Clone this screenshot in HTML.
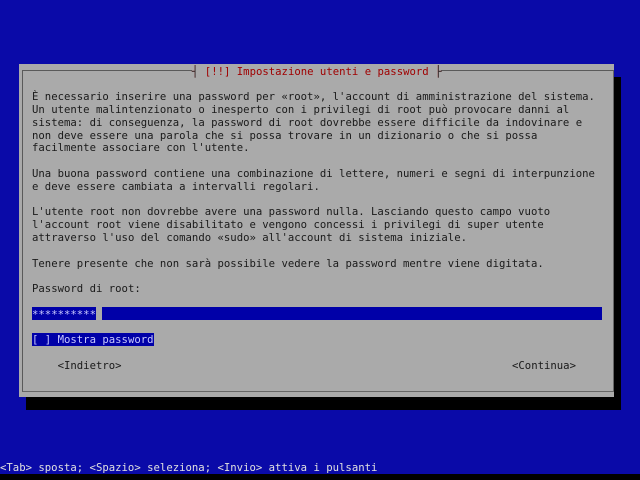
<!DOCTYPE html>
<html><head><meta charset="utf-8"><style>
html,body{margin:0;padding:0;width:640px;height:480px;overflow:hidden;background:#0a0aa8;}
.t{position:absolute;font-family:"DejaVu Sans Mono","Liberation Mono",monospace;font-size:10.63px;line-height:12.8px;height:12.8px;white-space:pre;color:#1a1a1a;}
.t>i{font-style:normal;position:relative;top:1.5px;}
.b{position:absolute;}
</style></head><body>
<div class="b" style="left:25.6px;top:76.8px;width:595.2px;height:332.8px;background:#000"></div>
<div class="b" style="left:19.2px;top:64px;width:595.2px;height:332.8px;background:#aaaaaa"></div>
<div class="b" style="left:22px;top:70px;width:589.5px;height:320px;border:1px solid #5a5a5a;border-right-color:#666;border-bottom-color:#666"></div>
<div class="t" style="left:192px;top:64px;background:#aaa;color:#a00000"><i>┤ [!!] Impostazione utenti e password ├</i></div>
<div class="t" style="left:192px;top:64px;color:#333"><i>┤</i></div>
<div class="t" style="left:435.2px;top:64px;color:#333"><i>├</i></div>
<div class="t" style="left:32px;top:89.6px"><i>È necessario inserire una password per «root», l'account di amministrazione del sistema.</i></div>
<div class="t" style="left:32px;top:102.4px"><i>Un utente malintenzionato o inesperto con i privilegi di root può provocare danni al</i></div>
<div class="t" style="left:32px;top:115.2px"><i>sistema: di conseguenza, la password di root dovrebbe essere difficile da indovinare e</i></div>
<div class="t" style="left:32px;top:128px"><i>non deve essere una parola che si possa trovare in un dizionario o che si possa</i></div>
<div class="t" style="left:32px;top:140.8px"><i>facilmente associare con l'utente.</i></div>
<div class="t" style="left:32px;top:166.4px"><i>Una buona password contiene una combinazione di lettere, numeri e segni di interpunzione</i></div>
<div class="t" style="left:32px;top:179.2px"><i>e deve essere cambiata a intervalli regolari.</i></div>
<div class="t" style="left:32px;top:204.8px"><i>L'utente root non dovrebbe avere una password nulla. Lasciando questo campo vuoto</i></div>
<div class="t" style="left:32px;top:217.6px"><i>l'account root viene disabilitato e vengono concessi i privilegi di super utente</i></div>
<div class="t" style="left:32px;top:230.4px"><i>attraverso l'uso del comando «sudo» all'account di sistema iniziale.</i></div>
<div class="t" style="left:32px;top:256px"><i>Tenere presente che non sarà possibile vedere la password mentre viene digitata.</i></div>
<div class="t" style="left:32px;top:281.6px"><i>Password di root:</i></div>
<div class="b" style="left:32px;top:307.2px;width:569.6px;height:12.8px;background:#0000a8;overflow:hidden"></div>
<div class="t" style="left:32px;top:307.2px;color:#c8c8ff;overflow:hidden;width:569.6px"><i>**********<span style="color:#ccc">_______________________________________________________________________________________</span></i></div>
<div class="b" style="left:96px;top:307.2px;width:6.4px;height:12.8px;background:#aaa"></div>
<div class="t" style="left:32px;top:332.8px;background:#0000a8;color:#c8c8ff"><i>[ ] Mostra password</i></div>
<div class="t" style="left:57.6px;top:358.4px"><i>&lt;Indietro&gt;</i></div>
<div class="t" style="left:512px;top:358.4px"><i>&lt;Continua&gt;</i></div>
<div class="t" style="left:0;top:460.8px;color:#e0e0e0"><i>&lt;Tab&gt; sposta; &lt;Spazio&gt; seleziona; &lt;Invio&gt; attiva i pulsanti</i></div>
<div class="b" style="left:0;top:473.6px;width:640px;height:6.4px;background:#000"></div>
</body></html>
